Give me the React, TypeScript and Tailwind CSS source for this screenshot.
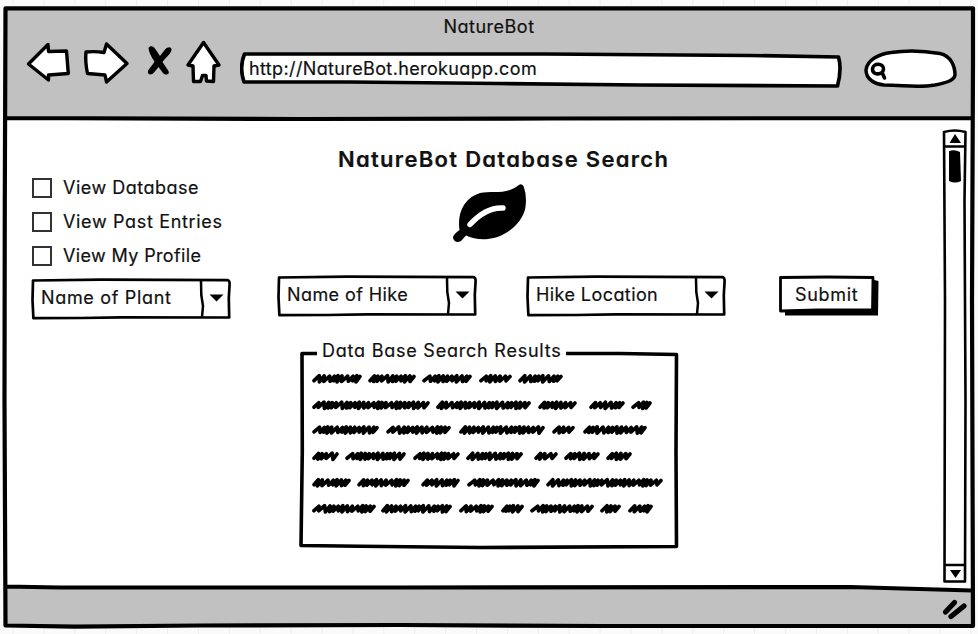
import React from "react";

const font = "font-[Inter,'Noto_Sans',sans-serif] [font-feature-settings:'cv11','ss03'] [-webkit-text-stroke:0.2px_#111] whitespace-nowrap text-[#111]";
const layer = "col-start-1 row-start-1";

/* Each entry is [start, end] of a scribbled word, one array per line. */
const lines: { y: number; words: [number, number][] }[] = [
  { y: 27.5, words: [[12, 62], [68, 116], [122, 172], [179, 212], [218, 263]] },
  { y: 54, words: [[12, 130], [136, 231], [238, 277], [289, 325], [331, 352]] },
  { y: 78.7, words: [[12, 79], [86, 151], [159, 245], [252, 275], [283, 347]] },
  { y: 105, words: [[12, 39], [45, 106], [113, 160], [166, 223], [234, 258], [264, 300], [306, 332]] },
  { y: 131.5, words: [[12, 51], [57, 110], [121, 160], [167, 240], [246, 363]] },
  { y: 157.5, words: [[12, 76], [81, 152], [159, 194], [201, 224], [230, 294], [300, 321], [328, 353]] },
];

/* Relative pitch of the consecutive pen strokes in a word. */
const pitch = [5.4, 4.4, 6.2, 3.6, 3.4, 4.6, 6.6, 4.2, 3.4, 5.2, 3.6];

function scribble(y: number, a: number, b: number, seed: number) {
  const steps: number[] = [];
  let total = 0;
  for (let i = seed; total < b - a - 10; i++) {
    steps.push(pitch[i % pitch.length]);
    total += pitch[i % pitch.length];
  }
  const k = (b - a - 8) / total;
  let x = a + 2;
  let d = `M${x} ${y + 2.2}`;
  steps.forEach((s, i) => {
    const v = ((seed * 7 + i * 5) % 4) * 0.35;
    const w = s * k;
    d += `L${(x + w * 0.5 + 2.6).toFixed(1)} ${(y - 2.8 + v * 0.6).toFixed(1)}L${(x + w).toFixed(1)} ${(y + 3.4 - v).toFixed(1)}`;
    x += w;
  });
  return d + `L${b - 2} ${y - 2}`;
}

function Select({ label, spacing }: { label: string; spacing: string }) {
  return (
    <div className="grid h-[42px] w-[200px]">
      <svg className={layer} width="200" height="42" fill="none" stroke="#000" strokeLinejoin="round">
        <path d="M2 2.5L70 1.6L197 2.2Q199 3 198.5 8L197.8 20L198.2 39.5L90 39.3L50 40L2.4 40.2L1.5 22Z" fill="#fff" strokeWidth="2.7" />
        <path d="M170 3L170.3 17L172 28L171 39" strokeWidth="2.5" />
        <path d="M178.5 16.5L192.5 16.5L185.500 23.5Z" fill="#000" stroke="none" />
      </svg>
      <span className={`${layer} ${font} ${spacing} pl-[10px] pt-[7px] text-[18px] leading-[26px]`}>{label}</span>
    </div>
  );
}

function Check({ label, spacing }: { label: string; spacing: string }) {
  return (
    <div className="flex h-[34px] items-center gap-[11px]">
      <span className="h-5 w-5 border-2 border-[#333] bg-white" />
      <span className={`${font} ${spacing} pb-[2px] text-[18px]`}>{label}</span>
    </div>
  );
}

function Toolbar() {
  return (
    <header className="h-[118px] pt-[16px]">
      <div className={`${font} text-center text-[18px] leading-[22px] tracking-[0.5px]`}>NatureBot</div>
      <div className="flex items-start">
        <svg className="shrink-0" width="240" height="60" viewBox="0 38 240 60" fill="#fff" stroke="#000" strokeWidth="3.4" strokeLinejoin="round" strokeLinecap="round">
          <path d="M28.5 64L48 44.5L48.5 51.5L66.5 51L68.3 73.500L48.5 75L48.5 80Z" />
          <path d="M86 52Q95 51 104 52.500L106.5 44L127 63.500L106.5 82L105 75L87.5 73.500Q85 62 86 52Z" />
          <path d="M148.500 48C150 45 154 46 156 50L160 56L165 49.500C168 46 172 47 171.500 50C171 54 165 58 162.500 62L168.500 71C170 74.500 166 76 163 73L158.500 67L154 72.500C151 76 147 74.500 148 71C149 68 153 65 154.500 61.500Q149 54 148.500 48Z" fill="#000" stroke="none" />
          <path d="M203.5 42.5L219 65L214 66L213.5 81.5L206.5 81L206 75.5L202.5 75.5L200.5 81.5L193.5 81.5L193 66L188 65Z" />
        </svg>
        <div className="grid h-[60px] w-[602px]">
          <svg className={layer} width="602" height="60" viewBox="240 38 602 60">
            <path d="M244.500 54L545 54L680 55L750 55.5L838.500 57Q842 69 837.5 86L640 85L500 83.500L350 82L244 82Q239 67 244.5 54Z" fill="#fff" stroke="#000" strokeWidth="3.7" strokeLinejoin="round" />
          </svg>
          <span className={`${layer} ${font} pl-[9px] pt-[18px] text-[18px] leading-[26px] tracking-[0.37px]`}>http://NatureBot.herokuapp.com</span>
        </div>
        <svg className="shrink-0" width="136" height="60" viewBox="842 38 136 60" stroke="#000" strokeLinecap="round">
          <path d="M866 70C867 60 879 54 891 52.5C907 50 926 51 940 53.5C951 56 955 66 955 75C954 81 945 83 935 85C917 88 904 85 884 85C874 84 866 79 866 70Z" fill="#fff" strokeWidth="3.5" />
          <path d="M883.500 69C884 63 873 62.500 872.500 69C872 75 883 76 883.500 69ZM882.500 73.500L884.500 78" fill="none" strokeWidth="3.6" />
        </svg>
      </div>
    </header>
  );
}

function Results() {
  return (
    <section className="ml-[298px] mt-[18px] grid h-[214px] w-[382px]">
      <svg className={layer} width="382" height="214" viewBox="-2 -12 382 214" fill="none" stroke="#000" strokeLinecap="round" strokeLinejoin="round">
        <path d="M17 2.5L2 2.5L2.3 100L1 194.500L60 195.3L180 196.500L376.500 195.500L376 100L376.500 3.500L320 2.5L266 2.5" strokeWidth="3.6" strokeLinecap="butt" />
        {lines.map((line, r) => line.words.map(([a, b], i) => (
          <path key={`${r}-${i}`} d={scribble(line.y, a, b, r + i * 3)} strokeWidth="3.7" />
        )))}
      </svg>
      <h2 className={`${layer} ${font} pl-[24px] text-[18px] leading-[24px] tracking-[0.77px]`}>Data Base Search Results</h2>
    </section>
  );
}

export default function App() {
  return (
    <div className="grid h-[634px] w-[978px] overflow-hidden bg-[#fafafa]">
      <svg className={layer} width="978" height="634">
        <g stroke="#eeeeee">
          {Array.from({ length: 32 }, (_, i) => (
            <path key={i} d={`M${13 + i * 30.9} 0V634`} />
          ))}
        </g>
        <path d="M5.5 8.3L973 8.3L972 300L973 626L600 626L400 625L200 625.5L75 626.7L5.5 625.5L4.5 400L4.8 200Z" fill="#fff" />
        <path d="M5.5 8.3L973 8.3L972.5 118L5.5 118ZM5.5 587L400 587.5L850 587L972 590.5L973 626L600 626L400 625L5.5 625.5Z" fill="#c1c1c1" />
        <path d="M5.5 8.3L973 8.3L973 60L972 300L973 626L600 626L400 625L200 625.5L75 626.7L5.5 625.5L4.5 400L4.8 200ZM5.5 118L300 119L550 118.5L972 118M5.5 586.5L60 587.5L400 587.5L850 587L972 590.5" fill="none" stroke="#000" strokeWidth="4.2" strokeLinejoin="round" />
      </svg>
      <div className={`${layer} flex h-[634px] flex-col`}>
        <Toolbar />
        <div className="flex h-[470px]">
          <main className="w-[940px]">
            <h1 className={`${font} h-[53px] pl-[338px] pt-[27px] text-[22px] font-semibold leading-[28px] tracking-[1.3px]`}>NatureBot Database Search</h1>
            <div className="flex h-[102px]">
              <div className="w-[450px] pl-8">
                <Check label="View Database" spacing="tracking-[0.5px]" />
                <Check label="View Past Entries" spacing="tracking-[0.66px]" />
                <Check label="View My Profile" spacing="tracking-[0.36px]" />
              </div>
              <svg className="mt-[10px]" width="80" height="66" viewBox="450 181 80 66">
                <path d="M517.500 186Q521 182.500 523.500 186Q527 195 525.500 207C523 223 505 238 488 239Q475 240 466 235.5L461 241Q455 244 453 238Q452.5 235 459.500 230C457 213 464 198 480 193C491 190.500 506 195 517.500 186Z" />
                <path d="M470 224.500Q486 207 503 208" fill="none" stroke="#fff" strokeWidth="5.4" strokeLinecap="round" />
              </svg>
            </div>
            <div className="flex h-[48px] items-start">
              <div className="ml-[31px] mt-[5px]"><Select label="Name of Plant" spacing="tracking-[0.67px]" /></div>
              <div className="ml-[46px] mt-[2px]"><Select label="Name of Hike" spacing="tracking-[0.42px]" /></div>
              <div className="ml-[49px] mt-[2px]"><Select label="Hike Location" spacing="tracking-[0.42px]" /></div>
              <button className="ml-[52px] mt-[2px] grid h-[44px] w-[102px]">
                <svg className={layer} width="102" height="44" strokeLinejoin="round">
                  <path d="M7 34L94 33L94 4.500L100.500 6L100 40.500L7 40.500Z" />
                  <path d="M2.500 2.500L50 2L95 2.500L94.500 35L40 35L2.500 36Z" fill="#fff" stroke="#000" strokeWidth="2.8" />
                </svg>
                <span className={`${layer} ${font} pl-[17px] pt-[7px] text-left text-[18px] leading-[26px] tracking-[0.7px]`}>Submit</span>
              </button>
            </div>
            <Results />
          </main>
          <svg width="38" height="470" viewBox="940 118 38 470" fill="none" stroke="#000" strokeWidth="2.6" strokeLinejoin="round">
            <path d="M944 132Q955 129 965.500 132L964.500 200L965.500 400L965 581.500L944.500 581.500L945 300ZM944 146.500H965.500M945 565H965" />
            <path d="M955 134L961 143H949.500ZM950 570H961L955.500 578Z" fill="#000" stroke="none" />
            <path d="M949 151Q955 149 960 152L961 181Q955 184 949 181Z" fill="#000" stroke="none" />
          </svg>
        </div>
        <footer className="flex h-[46px] justify-end">
          <svg width="38" height="46" viewBox="940 588 38 46" fill="none" stroke="#000" strokeWidth="5.2" strokeLinecap="round">
            <path d="M945.500 612L954.500 602.500M951 616.500L964 606" />
          </svg>
        </footer>
      </div>
    </div>
  );
}
